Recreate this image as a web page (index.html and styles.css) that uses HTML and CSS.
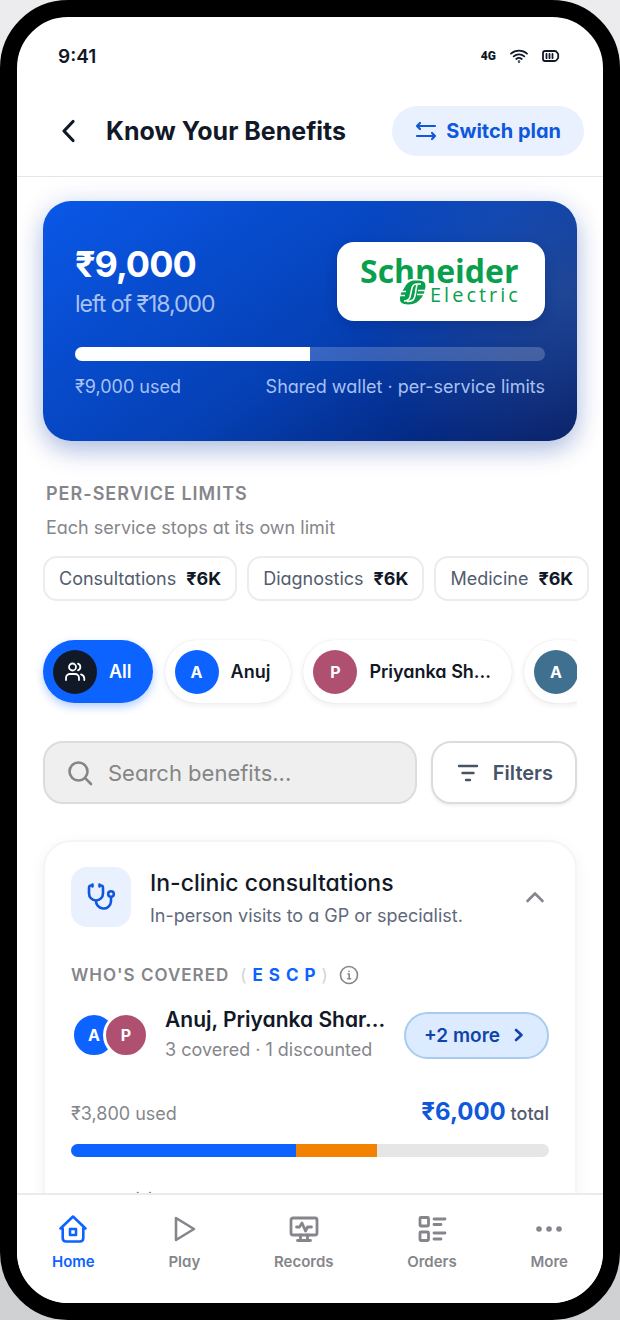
FILE: index.html
```html
<!DOCTYPE html>
<html lang="en">
<head>
  <meta charset="UTF-8" />
  <meta name="viewport" content="width=device-width, initial-scale=1" />
  <title>Know Your Benefits</title>
  <link rel="stylesheet" href="styles.css">
</head>
<body>
  <div class="phone">

    <div class="status-bar">
      <span class="time">9:41</span>
      <div class="status-icons">
        <span class="network">4G</span>
        <svg width="18" height="14" viewBox="0 0 18 14" fill="none" stroke="currentColor" stroke-width="1.8" stroke-linecap="round">
          <path d="M1 4.6a12 12 0 0 1 16 0M3.7 7.4a8 8 0 0 1 10.6 0M6.3 10a4.2 4.2 0 0 1 5.4 0"/>
          <circle cx="9" cy="12.6" r=".4"/>
        </svg>
        <svg width="18" height="12" viewBox="0 0 18 12" fill="none" stroke="currentColor" stroke-width="1.8" stroke-linecap="round" stroke-linejoin="round">
          <path d="M3 1h9.500q2 0 2.500 1.500l1.200 1.500v4l-1.200 1.500q-.5 1.500-2.500 1.500H3q-2 0-2-2V3q0-2 2-2zM4.500 3.800v4.400M7.500 3.800v4.400M10.500 3.800v4.400"/>
        </svg>
      </div>
    </div>

    <header class="header">
      <button class="back" type="button" aria-label="Back">
        <svg width="16" height="24" viewBox="0 0 16 24" fill="none" stroke="currentColor" stroke-width="3.2" stroke-linecap="round" stroke-linejoin="round"><path d="M13 2.500L4 12l9 9.500"/></svg>
      </button>
      <h1>Know Your Benefits</h1>
      <button class="switch-plan" type="button">
        <svg width="22" height="20" viewBox="0 0 22 20" fill="none" stroke="currentColor" stroke-width="2.200" stroke-linecap="round" stroke-linejoin="round"><path d="M20 5H2M5 2L2 5l3 3M2 15h18M17 12l3 3-3 3"/></svg>
        Switch plan
      </button>
    </header>

    <main class="content">
      <section class="wallet">
        <div class="wallet-top">
          <div>
            <div class="amount">₹9,000</div>
            <div class="amount-of">left of ₹18,000</div>
          </div>
          <div class="sponsor">
            <svg width="168" height="52" viewBox="0 0 168 52" role="img" aria-label="Schneider Electric">
              <text class="logo-name" x="3" y="27">Schneider</text>
              <text class="logo-sub" x="73" y="46">Electric</text>
              <g transform="translate(41 23)">
                <path d="M13 0h9q8 0 7 7-1 12-9 17-5 4-12 3-9-1-8-9Q2 2 13 0z" fill="#fff"/>
                <path d="M15 1.500h6q7 0 6.500 6-1 9-6.500 14-4 4-11 4-9 0-8-7 .5-5 4-9 3-7 9-8z" fill="#0a9f4d"/>
                <path d="M23 5h-4q-4 0-5 4l-2 9q-1 4-6 4" fill="none" stroke="#fff" stroke-width="1.600"/>
                <path d="M19 5.500l-1 5q-1 9-3 10.500-2 1.500-6 1.500" fill="none" stroke="#fff" stroke-width="1.600"/>
                <path d="M1 12.500h7M0 16.500h7M20 11.500h9M19 15.500h9" fill="none" stroke="#fff" stroke-width="1.400"/>
              </g>
            </svg>
          </div>
        </div>
        <div class="wallet-bar"><div class="wallet-fill" style="width: 50%"></div></div>
        <div class="wallet-foot">
          <span>₹9,000 used</span>
          <span>Shared wallet · per-service limits</span>
        </div>
      </section>

      <section class="limits">
        <h2>PER-SERVICE LIMITS</h2>
        <p>Each service stops at its own limit</p>
        <div class="chips">
          <div class="chip">Consultations <b>₹6K</b></div>
          <div class="chip">Diagnostics <b>₹6K</b></div>
          <div class="chip">Medicine <b>₹6K</b></div>
        </div>
      </section>

      <div class="members">
        <button class="member active" type="button">
          <span class="avatar dark">
            <svg width="22" height="22" viewBox="0 0 22 22" fill="none" stroke="currentColor" stroke-width="1.8" stroke-linecap="round"><circle cx="8.500" cy="6" r="3.500"/><path d="M2 19v-2a4 4 0 0 1 4-4h5a4 4 0 0 1 4 4v2M14 2.700a3.500 3.500 0 0 1 0 6.600M17 13.300a4.500 4.500 0 0 1 3.300 4.200V19"/></svg>
          </span>
          All
        </button>
        <button class="member" type="button"><span class="avatar blue">A</span>Anuj</button>
        <button class="member" type="button"><span class="avatar rose">P</span>Priyanka Sh...</button>
        <button class="member" type="button" aria-label="Asha"><span class="avatar teal">A</span></button>
      </div>

      <div class="search-row">
        <label class="search">
          <svg width="26" height="26" viewBox="0 0 26 26" fill="none" stroke="currentColor" stroke-width="2.600" stroke-linecap="round"><circle cx="11.500" cy="11.500" r="9"/><path d="M18.200 18.200L24 24"/></svg>
          <input type="text" placeholder="Search benefits..." aria-label="Search benefits" />
        </label>
        <button class="filters" type="button">
          <svg width="22" height="18" viewBox="0 0 22 18" fill="none" stroke="currentColor" stroke-width="2.400" stroke-linecap="round"><path d="M2 2h18M5.500 9h11M9 16h4"/></svg>
          Filters
        </button>
      </div>

      <article class="benefit">
        <div class="benefit-head">
          <div class="tile">
            <svg width="30" height="30" viewBox="0 0 30 30" fill="none" stroke="currentColor" stroke-width="2.600" stroke-linecap="round" stroke-linejoin="round"><path d="M6.500 3.500H5Q3 3.500 3 6v5.500a7 7 0 0 0 14 0V6q0-2.500-2-2.500h-1.500M6.500 2.500v2M13.500 2.500v2M10 18.500a7.500 7.500 0 0 0 15 1V15"/><circle cx="25" cy="12" r="2.800"/></svg>
          </div>
          <div class="benefit-title">
            <h3>In-clinic consultations</h3>
            <p>In-person visits to a GP or specialist.</p>
          </div>
          <button class="toggle" type="button" aria-label="Collapse">
            <svg width="20" height="12" viewBox="0 0 20 12" fill="none" stroke="currentColor" stroke-width="2.600" stroke-linecap="round" stroke-linejoin="round"><path d="M2.500 10L10 2.500l7.500 7.500"/></svg>
          </button>
        </div>

        <div class="covered-label">
          <h4>WHO'S COVERED</h4>
          <span class="codes"><i>(</i><b>E</b><b>S</b><b>C</b><b>P</b><i>)</i></span>
          <svg width="20" height="20" viewBox="0 0 20 20" fill="none" stroke="currentColor" stroke-width="1.600" stroke-linecap="round" stroke-linejoin="round"><circle cx="10" cy="10" r="8.500"/><path d="M9 9h1.200v4.500M8.800 13.800h2.800M10 6.300v.2"/></svg>
        </div>

        <div class="covered">
          <div class="stack">
            <span class="avatar small blue">A</span>
            <span class="avatar small rose">P</span>
          </div>
          <div class="people">
            <div class="names">Anuj, Priyanka Shar...</div>
            <div class="count">3 covered · 1 discounted</div>
          </div>
          <button class="more" type="button">
            +2 more
            <svg width="10" height="14" viewBox="0 0 10 14" fill="none" stroke="currentColor" stroke-width="2.600" stroke-linecap="round" stroke-linejoin="round"><path d="M2 2l5.500 5L2 12"/></svg>
          </button>
        </div>

        <div class="usage">
          <span>₹3,800 used</span>
          <span class="total"><b>₹6,000</b> total</span>
        </div>
        <div class="usage-bar">
          <div class="used-self" style="width: 47%"></div>
          <div class="used-family" style="width: 17%"></div>
        </div>
        <div class="next">across visits</div>
      </article>
    </main>

    <nav class="tabs">
      <a class="tab current" href="#home">
        <svg width="30" height="30" viewBox="0 0 30 30" fill="none" stroke="currentColor" stroke-width="2.600" stroke-linecap="round" stroke-linejoin="round"><path d="M2.500 14.500h2.200V24q0 3.500 3.500 3.500h13.600q3.500 0 3.500-3.500v-9.500h2.200L15 2.500z"/><rect x="12" y="15" width="6" height="6"/></svg>
        Home
      </a>
      <a class="tab" href="#play">
        <svg width="30" height="30" viewBox="0 0 30 30" fill="none" stroke="currentColor" stroke-width="2.600" stroke-linejoin="round"><path d="M7 4v22l18-11z"/></svg>
        Play
      </a>
      <a class="tab" href="#records">
        <svg width="30" height="30" viewBox="0 0 30 30" fill="none" stroke="currentColor" stroke-width="2.800" stroke-linecap="round" stroke-linejoin="round"><rect x="2" y="4" width="26" height="17" rx="2"/><path d="M7.500 13h3l2.500-4 3.500 8 2-4h4M11.500 21v5M18.500 21v5M8.500 26.500h13"/></svg>
        Records
      </a>
      <a class="tab" href="#orders">
        <svg width="30" height="30" viewBox="0 0 30 30" fill="none" stroke="currentColor" stroke-width="2.800" stroke-linecap="round"><rect x="3" y="3.500" width="8.500" height="8.500" rx="1"/><rect x="3" y="18" width="8.500" height="8.500" rx="1"/><path d="M17 5h11M17 10.500h7M17 19h11M17 25h7"/></svg>
        Orders
      </a>
      <a class="tab" href="#more">
        <svg width="30" height="30" viewBox="0 0 30 30" fill="currentColor"><circle cx="5" cy="15" r="2.800"/><circle cx="15" cy="15" r="2.800"/><circle cx="25" cy="15" r="2.800"/></svg>
        More
      </a>
    </nav>

  </div>
</body>
</html>
```
FILE: styles.css
```css
* {
  box-sizing: border-box;
}
body {
  margin: 0;
  background: linear-gradient(#ececee, #cfd0d1);
  color: #111827;
  font-family: Inter, 'Noto Sans', sans-serif;
  font-feature-settings: "cv11", "cv08" 0, "ss02" 0;
  font-size: 18px;
}
h1, h2, h3, h4, p {
  margin: 0;
}
button, input {
  font: inherit;
  font-feature-settings: inherit;
  color: inherit;
}
button {
  border: none;
  background: none;
  padding: 0;
  cursor: pointer;
}
svg {
  flex: none;
}

.phone {
  height: 100vh;
  display: flex;
  flex-direction: column;
  border: 17px solid #000;
  border-radius: 68px;
  background: #fff;
  overflow: hidden;
}

/* status bar + header */
.status-bar {
  flex: none;
  height: 78px;
  padding: 0 43px 0 41px;
  display: flex;
  align-items: center;
  justify-content: space-between;
}
.time {
  font-size: 19px;
  font-weight: 600;
}
.status-icons {
  display: flex;
  align-items: center;
  gap: 14px;
}
.network {
  font-family: 'Roboto', sans-serif;
  font-size: 12px;
  font-weight: 900;
}
.header {
  flex: none;
  display: flex;
  align-items: center;
  padding: 11px 19px 20px 43px;
  border-bottom: 1px solid #e5e6e8;
}
.back {
  display: flex;
  margin-right: 30px;
}
h1 {
  flex: 1;
  font-size: 25px;
  font-weight: 700;
  white-space: nowrap;
}
.switch-plan {
  display: flex;
  align-items: center;
  gap: 9px;
  height: 50px;
  padding: 0 23px;
  border-radius: 25px;
  background: #e9f1ff;
  color: #0f58dc;
  font-size: 20px;
  font-weight: 700;
}

.content {
  flex: 1;
  min-height: 0;
  overflow: hidden;
  padding: 24px 26px 0;
}

/* wallet card */
.wallet {
  padding: 41px 32px 43px;
  border-radius: 28px;
  background: radial-gradient(circle at 98% 38%, rgba(80, 110, 160, 0.35), transparent 38%), linear-gradient(145deg, #0a58e8, #0540b4 55%, #041a62);
  box-shadow: 0 10px 24px rgba(5, 50, 150, 0.28), 0 0 30px rgba(10, 80, 200, 0.08);
  color: #fff;
}
.wallet-top {
  display: flex;
  justify-content: space-between;
}
.amount {
  font-size: 36px;
  line-height: 45px;
  font-weight: 700;
  letter-spacing: -1px;
}
.amount-of {
  font-size: 23px;
  line-height: 34px;
  letter-spacing: -1px;
  color: #a8c1f2;
}
.sponsor {
  display: flex;
  align-items: center;
  justify-content: center;
  width: 208px;
  height: 79px;
  border-radius: 17px;
  background: #fff;
  box-shadow: 0 4px 12px rgba(0, 20, 80, 0.2);
}
.logo-name {
  font-family: 'Open Sans', sans-serif;
  font-size: 32px;
  font-weight: 700;
  fill: #0a9f4d;
}
.logo-sub {
  font-family: 'Open Sans', sans-serif;
  font-size: 20px;
  letter-spacing: 3px;
  fill: #0a9f4d;
}
.wallet-bar {
  height: 14px;
  margin-top: 26px;
  border-radius: 7px;
  background: rgba(255, 255, 255, 0.2);
  overflow: hidden;
}
.wallet-fill {
  height: 100%;
  background: #fff;
}
.wallet-foot {
  display: flex;
  justify-content: space-between;
  margin-top: 15px;
  line-height: 22px;
  color: #a8c1f2;
}

/* per-service limits */
.limits {
  margin-top: 42px;
}
h2 {
  margin-left: 3px;
  font-size: 18px;
  line-height: 22px;
  font-weight: 600;
  letter-spacing: 1px;
  color: #85868b;
}
.limits p {
  margin: 12px 3px 0;
  line-height: 22px;
  color: #85868b;
}
.chips {
  display: flex;
  gap: 10px;
  margin-top: 17px;
  margin-right: -26px;
}
.chip {
  flex: none;
  display: flex;
  align-items: center;
  gap: 10px;
  height: 45px;
  padding: 0 14px;
  border: 2px solid #ececee;
  border-radius: 14px;
  color: #525c6e;
}
.chip b {
  color: #111827;
}

/* member filter */
.members {
  display: flex;
  gap: 12px;
  margin: 33px 0 0 -6px;
  padding: 6px 0 12px 6px;
  overflow: hidden;
}
.member {
  flex: none;
  display: flex;
  align-items: center;
  gap: 12px;
  height: 63px;
  padding: 0 21px 0 10px;
  border-radius: 32px;
  background: #fff;
  box-shadow: 0 2px 6px rgba(0, 0, 0, 0.08), 0 0 1px rgba(0, 0, 0, 0.15);
  font-weight: 600;
}
.member.active {
  background: #0d63ff;
  box-shadow: 0 4px 8px rgba(13, 99, 255, 0.3);
  color: #fff;
}
.avatar {
  display: flex;
  align-items: center;
  justify-content: center;
  width: 44px;
  height: 44px;
  border-radius: 50%;
  color: #fff;
  font-size: 16px;
  font-weight: 700;
}
.avatar.small {
  width: 46px;
  height: 46px;
  border: 3px solid #fff;
}
.dark {
  background: #111827;
}
.blue {
  background: #0d63ff;
}
.rose {
  background: #b05070;
}
.teal {
  background: #40708f;
}

/* search */
.search-row {
  display: flex;
  gap: 14px;
  margin-top: 26px;
}
.search {
  flex: 1;
  min-width: 0;
  display: flex;
  align-items: center;
  gap: 15px;
  height: 63px;
  padding: 0 22px;
  border: 2px solid #dcdcdc;
  border-radius: 20px;
  background: #efefef;
  color: #858585;
}
.search input {
  flex: 1;
  min-width: 0;
  padding: 0;
  border: none;
  outline: none;
  background: none;
  font-size: 22px;
}
.search input::placeholder {
  color: #858585;
}
.filters {
  flex: none;
  display: flex;
  align-items: center;
  gap: 14px;
  height: 63px;
  padding: 0 22px 0 24px;
  border: 2px solid #dcdcdc;
  border-radius: 20px;
  background: #fff;
  box-shadow: 0 2px 3px rgba(0, 0, 0, 0.06);
  color: #475367;
  font-size: 20px;
  font-weight: 600;
}

/* benefit card */
.benefit {
  margin-top: 36px;
  padding: 20px 26px;
  border: 2px solid #f5f5f6;
  border-radius: 28px;
  background: #fff;
  box-shadow: 0 4px 16px rgba(0, 0, 0, 0.05);
}
.benefit-head {
  display: flex;
  align-items: center;
  gap: 19px;
}
.tile {
  flex: none;
  display: flex;
  align-items: center;
  justify-content: center;
  width: 60px;
  height: 60px;
  border-radius: 16px;
  background: #e9f1ff;
  color: #0f58dc;
}
.benefit-title {
  flex: 1;
  padding-top: 4px;
}
h3 {
  font-size: 23px;
  line-height: 34px;
  font-weight: 500;
}
.benefit-title p {
  line-height: 32px;
  color: #60697a;
}
.toggle {
  display: flex;
  padding: 4px;
  color: #85868b;
}
.covered-label {
  display: flex;
  align-items: center;
  gap: 11px;
  margin-top: 31px;
  line-height: 24px;
  color: #85868b;
}
h4 {
  font-size: 17px;
  font-weight: 600;
  letter-spacing: 1px;
}
.codes {
  display: flex;
  gap: 6px;
  font-size: 17px;
}
.codes i {
  font-style: normal;
  color: #d2d3d6;
}
.codes b {
  color: #0d63ff;
}
.covered {
  display: flex;
  align-items: center;
  margin-top: 18px;
}
.stack {
  display: flex;
}
.stack .rose {
  margin-left: -14px;
}
.people {
  flex: 1;
  padding-left: 16px;
  white-space: nowrap;
}
.names {
  font-size: 21px;
  line-height: 30px;
  font-weight: 600;
}
.count {
  line-height: 30px;
  color: #85868b;
}
.more {
  display: flex;
  align-items: center;
  gap: 14px;
  height: 47px;
  padding: 0 23px 0 18px;
  border: 2px solid #a8cbf0;
  border-radius: 24px;
  background: #dcebff;
  color: #1144a8;
  font-size: 19px;
  font-weight: 600;
}
.usage {
  display: flex;
  justify-content: space-between;
  align-items: baseline;
  margin-top: 32px;
  line-height: 30px;
  color: #85868b;
}
.total {
  color: #525c6e;
  font-weight: 500;
}
.total b {
  color: #0f58dc;
  font-size: 24px;
}
.usage-bar {
  display: flex;
  height: 13px;
  margin-top: 15px;
  border-radius: 7px;
  background: #e6e6e6;
  overflow: hidden;
}
.used-self {
  background: #0d63ff;
}
.used-family {
  background: #f28200;
}
.next {
  margin-top: 30px;
  font-size: 16px;
  line-height: 22px;
  color: #85868b;
}

/* bottom navigation */
.tabs {
  flex: none;
  display: flex;
  justify-content: space-between;
  height: 110px;
  padding: 19px 35px 0;
  border-top: 2px solid #ebebec;
  background: #fff;
}
.tab {
  display: flex;
  flex-direction: column;
  align-items: center;
  gap: 8px;
  color: #85868b;
  font-size: 15px;
  line-height: 20px;
  font-weight: 600;
  text-decoration: none;
}
.tab.current {
  color: #0d63ff;
}
```
